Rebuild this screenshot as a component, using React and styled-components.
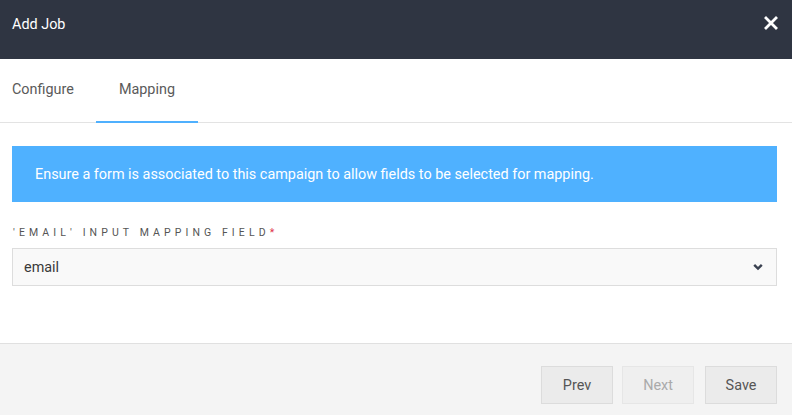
import React from 'react'
import styled, { createGlobalStyle } from 'styled-components'

const Global = createGlobalStyle`
	body {
		margin: 0;
		background: #fff;
		font-family: Roboto, 'Liberation Sans', sans-serif;
	}
	* { box-sizing: border-box; }
`

const Modal = styled.div`
	width: 792px;
	height: 415px;
	display: flex;
	flex-direction: column;
	overflow: hidden;
`

const Header = styled.div`
	height: 59px;
	flex-shrink: 0;
	background: #2f3542;
	display: flex;
	align-items: center;
	justify-content: space-between;
	padding: 0 14px 0 12px;
`

const Title = styled.div`
	color: #fff;
	font-size: 14.4px;
	margin-top: -10px;
`

const Close = styled.button`
	background: none;
	border: 0;
	padding: 0;
	margin-top: -14px;
	display: flex;
	cursor: pointer;
`

const Tabs = styled.div`
	height: 64px;
	flex-shrink: 0;
	display: flex;
	border-bottom: 1px solid #e3e3e3;
`

const Tab = styled.div`
	font-size: 14.4px;
	color: #5a5a5a;
	padding: 0 ${p => (p.$first ? '22px' : '23px')} 0 ${p => (p.$first ? '12px' : '23px')};
	display: flex;
	align-items: center;
	margin-top: -2px;
	border-bottom: 2px solid ${p => (p.$active ? '#4fb0fe' : 'transparent')};
	margin-bottom: -1px;
`

const Body = styled.div`
	flex: 1;
	padding: 23px 15px 0 12px;
`

const Alert = styled.div`
	background: #4fb1ff;
	color: #fff;
	font-size: 14.4px;
	height: 56px;
	display: flex;
	align-items: center;
	padding: 0 23px;
	margin-bottom: 24px;
`

const Label = styled.div`
	font-size: 10.5px;
	letter-spacing: 4.1px;
	text-transform: uppercase;
	color: #555;
	margin-bottom: 9px;
	padding-left: 1px;
`

const Req = styled.span`
	color: #e0344a;
`

const Select = styled.div`
	height: 38px;
	background: #f9f9f9;
	border: 1px solid #ddd;
	display: flex;
	align-items: center;
	justify-content: space-between;
	padding: 0 13px 0 11px;
	font-size: 14.4px;
	color: #3a3a3a;
`

const Footer = styled.div`
	height: 72px;
	flex-shrink: 0;
	background: #f4f4f4;
	border-top: 1px solid #e0e0e0;
	display: flex;
	justify-content: flex-end;
	align-items: flex-start;
	gap: 9px;
	padding: 22px 15px 0 0;
`

const Button = styled.button`
	width: 72px;
	height: 38px;
	background: ${p => (p.disabled ? '#efefef' : '#ebebeb')};
	border: 1px solid ${p => (p.disabled ? '#e6e6e6' : '#dcdcdc')};
	color: ${p => (p.disabled ? '#aaa' : '#555')};
	font-family: inherit;
	font-size: 14.4px;
	padding: 0;
	cursor: ${p => (p.disabled ? 'default' : 'pointer')};
	margin-left: ${p => (p.$gap ? '2px' : '0')};
`

const Chevron = () => (
	<svg width="10" height="8" viewBox="0 0 10 8">
		<path d="M1.2 1.8 L5 5.6 L8.8 1.8" fill="none" stroke="#3a4150" strokeWidth="2.4" />
	</svg>
)

const CloseIcon = () => (
	<svg width="14" height="14" viewBox="0 0 14 14">
		<path d="M2 2 L12 12 M12 2 L2 12" stroke="#fff" strokeWidth="2.8" strokeLinecap="square" />
	</svg>
)

const App = () => (
	<Modal>
		<Global />
		<Header>
			<Title>Add Job</Title>
			<Close>
				<CloseIcon />
			</Close>
		</Header>
		<Tabs>
			<Tab $first>Configure</Tab>
			<Tab $active>Mapping</Tab>
		</Tabs>
		<Body>
			<Alert>Ensure a form is associated to this campaign to allow fields to be selected for mapping.</Alert>
			<Label>
				'Email' input mapping field<Req>*</Req>
			</Label>
			<Select>
				email
				<Chevron />
			</Select>
		</Body>
		<Footer>
			<Button>Prev</Button>
			<Button disabled>Next</Button>
			<Button $gap>Save</Button>
		</Footer>
	</Modal>
)

export default App
